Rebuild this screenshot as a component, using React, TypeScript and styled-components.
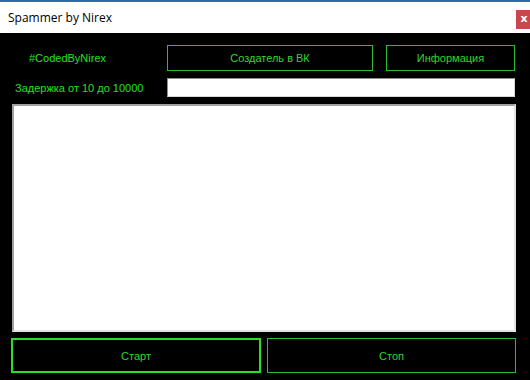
import React from 'react';
import styled, { createGlobalStyle } from 'styled-components';

const GlobalStyle = createGlobalStyle`
  html, body {
    margin: 0;
    padding: 0;
    background: #000;
  }
  * {
    box-sizing: border-box;
  }
`;

const Window = styled.div`
  width: 530px;
  height: 380px;
  display: flex;
  flex-direction: column;
  background: #000;
  border-top: 2px solid #2a6db5;
  overflow: hidden;
`;

const TitleBar = styled.div`
  height: 31px;
  background: #fff;
  display: flex;
  align-items: center;
  justify-content: space-between;
  padding-left: 8px;
  font: 400 12px "Open Sans", "Noto Sans", sans-serif;
  color: #000;
`;

const CloseButton = styled.div`
  width: 16px;
  height: 19px;
  margin-right: -2px;
  margin-top: 3px;
  background: #c7474c;
  color: #fff;
  font: 700 11px "DejaVu Sans", sans-serif;
  display: flex;
  align-items: center;
  justify-content: center;
  padding-bottom: 2px;
`;

const Body = styled.div`
  flex: 1;
  display: flex;
  flex-direction: column;
  padding: 12px 14px 0 12px;
`;

const Row = styled.div`
  display: flex;
  align-items: center;
  margin-bottom: 7px;
`;

const ButtonGroup = styled.div`
  display: flex;
  gap: 13px;
`;

const Label = styled.div<{ $indent: number }>`
  width: 155px;
  flex-shrink: 0;
  padding-left: ${(p) => p.$indent}px;
  color: #22e022;
  font: 400 11px "Liberation Sans", Arial, sans-serif;
  white-space: nowrap;
`;

const OutlineButton = styled.div<{ $width: number; $height: number; $thick?: boolean }>`
  width: ${(p) => p.$width}px;
  height: ${(p) => p.$height}px;
  flex-shrink: 0;
  border: ${(p) => (p.$thick ? '2px solid #25e025' : '1px solid #2cbf2c')};
  color: #2ed62e;
  display: flex;
  align-items: center;
  justify-content: center;
  font: 400 11px "Liberation Sans", Arial, sans-serif;
`;

const TextInput = styled.input`
  width: 348px;
  height: 19px;
  border: 1px solid #8c8c8c;
  border-right-color: #d8d8d8;
  border-bottom-color: #d8d8d8;
  background: #fff;
  outline: none;
  padding: 0 3px;
  font: 400 12px "Liberation Sans", Arial, sans-serif;
`;

const MessageArea = styled.textarea`
  width: 504px;
  height: 228px;
  border: 2px solid #a0a0a0;
  border-right-color: #e3e3e3;
  border-bottom-color: #e3e3e3;
  background: #fff;
  outline: none;
  resize: none;
  margin-bottom: 6px;
  font: 400 12px "Liberation Sans", Arial, sans-serif;
`;

const BottomRow = styled.div`
  display: flex;
  gap: 6px;
  margin-left: -1px;
`;

export default function App() {
  return (
    <>
      <GlobalStyle />
      <Window>
        <TitleBar>
          <span>Spammer by Nirex</span>
          <CloseButton>x</CloseButton>
        </TitleBar>
        <Body>
          <Row>
            <Label $indent={17}>#CodedByNirex</Label>
            <ButtonGroup>
              <OutlineButton $width={206} $height={26}>Создатель в ВК</OutlineButton>
              <OutlineButton $width={129} $height={26}>Информация</OutlineButton>
            </ButtonGroup>
          </Row>
          <Row>
            <Label $indent={3}>Задержка от 10 до 10000</Label>
            <TextInput />
          </Row>
          <MessageArea />
          <BottomRow>
            <OutlineButton $width={250} $height={35} $thick>Старт</OutlineButton>
            <OutlineButton $width={249} $height={35}>Стоп</OutlineButton>
          </BottomRow>
        </Body>
      </Window>
    </>
  );
}
